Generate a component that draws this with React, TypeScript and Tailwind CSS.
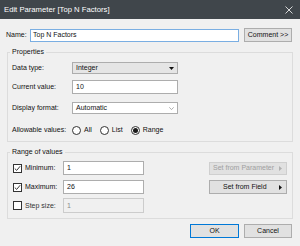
import React from "react";

function Radio({ label, checked }: { label: string; checked?: boolean }) {
  return (
    <div className="flex items-center gap-[3px]">
      <span className="w-[9px] h-[9px] rounded-full border border-[#333333] bg-white flex items-center justify-center">
        {checked && <span className="w-[5px] h-[5px] rounded-full bg-[#1a1a1a]"></span>}
      </span>
      <span>{label}</span>
    </div>
  );
}

function Check({ checked }: { checked?: boolean }) {
  return (
    <span className="w-[9px] h-[9px] border border-[#333333] bg-white flex items-center justify-center shrink-0">
      {checked && (
        <svg width="7" height="7" viewBox="0 0 7 7">
          <path d="M0.8 3.6 L2.7 5.4 L6.2 1.2" fill="none" stroke="#222" strokeWidth="0.9" />
        </svg>
      )}
    </span>
  );
}

export default function App() {
  return (
    <div
      className="w-[300px] h-[246px] bg-[#f0f0f0] text-[#111111] text-[7px] leading-[8px] overflow-hidden"
      style={{ fontFamily: '"Liberation Sans", Arial, sans-serif' }}
    >
      {/* Title bar */}
      <div className="h-[19px] bg-[#40464b] flex items-center justify-between pl-[4px] pr-[7px]">
        <span className="text-white text-[7.7px]">Edit Parameter [Top N Factors]</span>
        <svg width="8" height="8" viewBox="0 0 8 8">
          <path d="M0.5 0.5 L7.5 7.5 M7.5 0.5 L0.5 7.5" stroke="#e8e8e8" strokeWidth="0.9" />
        </svg>
      </div>

      <div className="pt-[9px] pl-[6px] pr-[7px]">
        {/* Name row */}
        <div className="flex items-center h-[14px]">
          <span className="w-[24px]">Name:</span>
          <div className="w-[209px] h-[13px] border border-[#7aaee2] bg-white flex items-center px-[2px]">
            Top N Factors
          </div>
          <button className="ml-[5px] w-[48px] h-[14px] bg-[#e1e1e1] border border-[#adadad] flex items-center justify-center">
            Comment &gt;&gt;
          </button>
        </div>

        {/* Properties */}
        <fieldset className="mt-[6px] ml-[1px] border border-[#dcdcdc]">
          <legend className="ml-[2px] px-[2px] leading-[8px]">Properties</legend>
          <div className="pt-[6px] pl-[4px] pb-[5px]">
            <div className="flex items-center h-[12px]">
              <span className="w-[60px]">Data type:</span>
              <div className="w-[106px] h-[12px] bg-[#e5e5e5] border border-[#adadad] flex items-center justify-between pl-[3px] pr-[3px]">
                <span>Integer</span>
                <svg width="5" height="3" viewBox="0 0 5 3">
                  <path d="M0 0 L5 0 L2.5 3 Z" fill="#111" />
                </svg>
              </div>
            </div>
            <div className="flex items-center h-[14px] mt-[6px]">
              <span className="w-[60px]">Current value:</span>
              <div className="w-[106px] h-[14px] bg-white border border-[#adadad] flex items-center pl-[3px]">10</div>
            </div>
            <div className="flex items-center h-[12px] mt-[8px]">
              <span className="w-[60px]">Display format:</span>
              <div className="w-[106px] h-[12px] bg-white border border-[#adadad] flex items-center justify-between pl-[3px] pr-[3px]">
                <span>Automatic</span>
                <svg width="5" height="3" viewBox="0 0 5 3">
                  <path d="M0.3 0.3 L2.5 2.6 L4.7 0.3" fill="none" stroke="#9a9a9a" strokeWidth="0.8" />
                </svg>
              </div>
            </div>
            <div className="flex items-center h-[12px] mt-[10px]">
              <span className="w-[60px]">Allowable values:</span>
              <div className="flex items-center gap-[8px]">
                <Radio label="All" />
                <Radio label="List" />
                <Radio label="Range" checked />
              </div>
            </div>
          </div>
        </fieldset>

        {/* Range of values */}
        <fieldset className="mt-[6px] ml-[1px] border border-[#dcdcdc]">
          <legend className="ml-[2px] px-[2px] leading-[8px]">Range of values</legend>
          <div className="pt-[5px] pl-[5px] pr-[5px] pb-[5px]">
            <div className="flex items-center h-[14px]">
              <Check checked />
              <span className="ml-[3px] w-[38px]">Minimum:</span>
              <div className="w-[81px] h-[14px] bg-white border border-[#adadad] flex items-center pl-[3px]">1</div>
              <button className="ml-auto w-[78px] h-[13px] bg-[#e1e1e1] border border-[#cfcfcf] text-[#a0a0a0] flex items-center justify-between pl-[3px] pr-[4px] whitespace-nowrap">
                <span>Set from Parameter</span>
                <svg width="3" height="5" viewBox="0 0 3 5" className="shrink-0">
                  <path d="M0 0 L3 2.5 L0 5 Z" fill="#b0b0b0" />
                </svg>
              </button>
            </div>
            <div className="flex items-center h-[14px] mt-[5px]">
              <Check checked />
              <span className="ml-[3px] w-[38px]">Maximum:</span>
              <div className="w-[81px] h-[14px] bg-white border border-[#adadad] flex items-center pl-[3px]">26</div>
              <button className="ml-auto w-[78px] h-[14px] bg-[#e1e1e1] border border-[#adadad] flex items-center justify-between pl-[13px] pr-[4px]">
                <span>Set from Field</span>
                <svg width="3" height="5" viewBox="0 0 3 5" className="shrink-0">
                  <path d="M0 0 L3 2.5 L0 5 Z" fill="#111" />
                </svg>
              </button>
            </div>
            <div className="flex items-center h-[15px] mt-[4px]">
              <Check />
              <span className="ml-[3px] w-[38px] text-[#333333]">Step size:</span>
              <div className="w-[81px] h-[15px] bg-[#f0f0f0] border border-[#cccccc] text-[#8a8a8a] flex items-center pl-[3px]">1</div>
            </div>
          </div>
        </fieldset>

        {/* Footer buttons */}
        <div className="flex justify-end gap-[5px] mt-[5px] pr-[1px]">
          <button className="w-[49px] h-[14px] bg-[#e1e1e1] border border-[#0078d7] flex items-center justify-center">OK</button>
          <button className="w-[48px] h-[14px] bg-[#e1e1e1] border border-[#adadad] flex items-center justify-center">Cancel</button>
        </div>
      </div>
    </div>
  );
}
